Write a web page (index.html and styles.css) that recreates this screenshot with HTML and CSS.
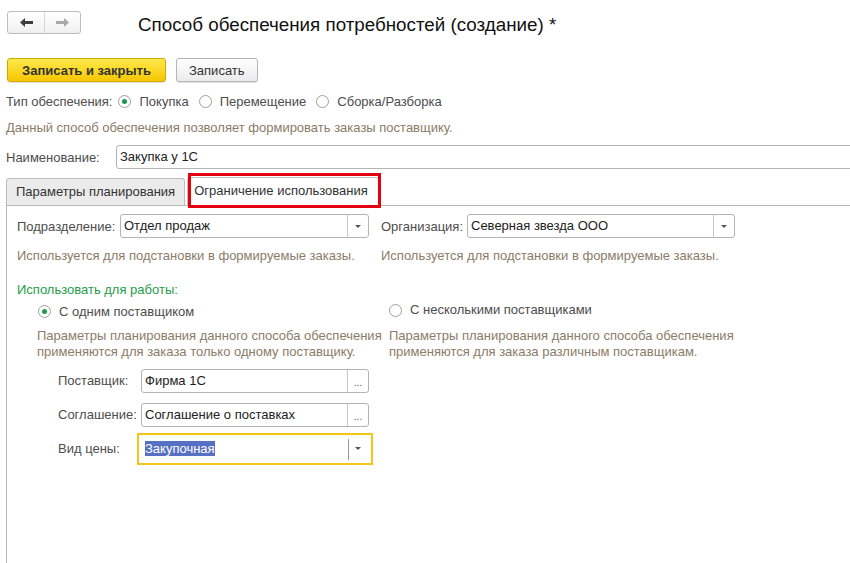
FILE: index.html
```html
<!DOCTYPE html>
<html lang="ru">
<head>
  <meta charset="UTF-8" />
  <meta name="viewport" content="width=device-width, initial-scale=1.0" />
  <title>Способ обеспечения потребностей (создание)</title>
  <link rel="stylesheet" href="styles.css">
</head>
<body>
  <div class="page">
    <div class="header">
      <div class="nav">
        <button class="nav-btn">
          <svg width="13" height="9" viewBox="0 0 13 9"><path d="M0 4.5 L5 0 V3 H13 V6 H5 V9 Z" fill="#3f3f3f"/></svg>
        </button>
        <button class="nav-btn">
          <svg width="13" height="9" viewBox="0 0 13 9"><path d="M13 4.5 L8 0 V3 H0 V6 H8 V9 Z" fill="#a8a8a8"/></svg>
        </button>
      </div>
      <h1 class="title">Способ обеспечения потребностей (создание) *</h1>
    </div>

    <div class="toolbar">
      <button class="btn btn-primary">Записать и закрыть</button>
      <button class="btn">Записать</button>
    </div>

    <div class="type-row">
      <span class="label">Тип обеспечения:</span>
      <label class="radio"><span class="circle checked"></span>Покупка</label>
      <label class="radio"><span class="circle"></span>Перемещение</label>
      <label class="radio"><span class="circle"></span>Сборка/Разборка</label>
    </div>

    <div class="hint top-hint">Данный способ обеспечения позволяет формировать заказы поставщику.</div>

    <div class="name-row">
      <span class="label name-label">Наименование:</span>
      <div class="input name-input"><span class="value">Закупка у 1С</span></div>
    </div>

    <div class="tabs">
      <div class="tab">Параметры планирования</div>
      <div class="tab active">Ограничение использования<span class="mark"></span></div>
      <div class="tabs-fill"></div>
    </div>

    <div class="panel">
      <div class="two-cols">
        <div class="col col-left">
          <div class="field">
            <span class="label lbl-dept">Подразделение:</span>
            <div class="input grow"><span class="value">Отдел продаж</span><span class="drop"></span></div>
          </div>
          <div class="hint col-hint">Используется для подстановки в формируемые заказы.</div>
        </div>
        <div class="col col-right">
          <div class="field">
            <span class="label lbl-org">Организация:</span>
            <div class="input grow"><span class="value">Северная звезда ООО</span><span class="drop"></span></div>
          </div>
          <div class="hint col-hint">Используется для подстановки в формируемые заказы.</div>
        </div>
      </div>

      <div class="group-title">Использовать для работы:</div>

      <div class="mode-cols">
        <div class="mode mode-left">
          <label class="radio"><span class="circle checked"></span>С одним поставщиком</label>
          <div class="hint mode-hint">Параметры планирования данного способа обеспечения<br>применяются для заказа только одному поставщику.</div>
        </div>
        <div class="mode mode-right">
          <label class="radio"><span class="circle"></span>С несколькими поставщиками</label>
          <div class="hint mode-hint">Параметры планирования данного способа обеспечения<br>применяются для заказа различным поставщикам.</div>
        </div>
      </div>

      <div class="supplier">
        <div class="field srow">
          <span class="label lbl-sup">Поставщик:</span>
          <div class="input sinput"><span class="value">Фирма 1С</span><span class="more">...</span></div>
        </div>
        <div class="field srow">
          <span class="label lbl-sup">Соглашение:</span>
          <div class="input sinput"><span class="value">Соглашение о поставках</span><span class="more">...</span></div>
        </div>
        <div class="field srow">
          <span class="label lbl-sup">Вид цены:</span>
          <div class="input sinput focused"><span class="value"><span class="selected">Закупочная</span></span><span class="drop short"></span></div>
        </div>
      </div>
    </div>
  </div>
</body>
</html>
```

FILE: styles.css
```css
html, body { margin: 0; height: 100%; overflow: hidden; }
body { font-family: "Liberation Sans", Arial, sans-serif; font-size: 13px; color: #333; background: #fff; }
.page { display: flex; flex-direction: column; height: 100vh; padding-left: 6px; box-sizing: border-box; }

.header { display: flex; align-items: center; margin-top: 11px; height: 23px; }
.nav { display: flex; margin-left: 1px; border: 1px solid #bcbcbc; border-radius: 3px; background: linear-gradient(#ffffff, #f0f0f0); height: 23px; box-sizing: border-box; }
.nav-btn { width: 36px; height: 21px; border: 0; background: none; padding: 0; display: flex; align-items: center; justify-content: center; }
.nav-btn + .nav-btn { border-left: 1px solid #d6d6d6; }
.title { margin: 3px 0 0 57px; font-size: 18.8px; font-weight: normal; color: #111; line-height: 23px; }

.toolbar { display: flex; gap: 10px; margin-top: 24px; margin-left: 1px; }
.btn { height: 24px; padding: 0 12px; font-family: inherit; font-size: 13px; color: #333; border: 1px solid #b5b5b5; border-radius: 3px; background: linear-gradient(#ffffff, #ebebeb); box-shadow: 0 1px 1px rgba(0,0,0,0.12); }
.btn-primary { width: 159px; font-weight: bold; background: linear-gradient(#ffe94d, #f6c700); border-color: #d1a800; color: #333; }

.label { color: #4d4d4d; white-space: nowrap; }
.hint { color: #8a7c68; line-height: 16px; }

.radio { display: inline-flex; align-items: center; color: #4d4d4d; white-space: nowrap; }
.circle { width: 13px; height: 13px; box-sizing: border-box; border: 1px solid #a0a0a0; border-radius: 50%; background: #fff; margin-right: 8px; display: flex; align-items: center; justify-content: center; }
.circle.checked::after { content: ""; width: 5px; height: 5px; border-radius: 50%; background: #1a9b4b; }

.type-row { display: flex; align-items: center; height: 18px; margin-top: 10px; }
.type-row .label { margin-right: 6px; }
.type-row .radio { margin-right: 10px; }

.top-hint { margin-top: 10px; }

.name-row { display: flex; align-items: center; margin-top: 9px; }
.name-label { width: 110px; }
.input { display: flex; height: 24px; box-sizing: border-box; border: 1px solid #b4b4b4; border-radius: 3px; background: #fff; color: #222; }
.value { flex: 1; padding-left: 3px; line-height: 22px; white-space: nowrap; overflow: hidden; }
.name-input { flex: 1; margin-right: -20px; }

.drop { width: 20px; border-left: 1px solid #c8c8c8; display: flex; align-items: center; justify-content: center; }
.drop::after { content: ""; border-left: 3px solid transparent; border-right: 3px solid transparent; border-top: 3px solid #555; }
.drop.short { border-left: 0; position: relative; }
.drop.short::before { content: ""; position: absolute; left: 0; top: 1px; bottom: 0; border-left: 1px solid #9a9a9a; }
.more { width: 20px; border-left: 1px solid #c8c8c8; color: #555; font-size: 10px; text-align: center; line-height: 26px; }

.tabs { display: flex; margin-top: 9px; height: 27px; }
.tab { position: relative; height: 27px; box-sizing: border-box; padding: 0 9px; line-height: 25px; border: 1px solid #bdbdbd; border-bottom: 0; border-radius: 3px 3px 0 0; background: #ebebeb; color: #333; white-space: nowrap; }
.tab + .tab { margin-left: 2px; }
.tab.active { background: #fff; padding: 0 10px 0 6px; height: 28px; margin-top: -1px; z-index: 1; }
.mark { position: absolute; left: 0; top: -5px; width: 193px; height: 35px; box-sizing: border-box; border: 3px solid #e3000f; }
.tabs-fill { flex: 1; }

.panel { flex: 1; border-left: 1px solid #b8b8b8; border-top: 1px solid #b8b8b8; padding: 8px 0 0 10px; }

.two-cols { display: flex; gap: 12px; }
.col-left { width: 352px; }
.col-right { width: 354px; }
.field { display: flex; align-items: center; }
.grow { flex: 1; }
.lbl-dept { width: 103px; }
.lbl-org { width: 86px; }
.col-hint { margin-top: 10px; }

.group-title { color: #1f9d4a; margin-top: 18px; line-height: 16px; }

.mode-cols { display: flex; margin-top: 4px; }
.mode-left { width: 351px; padding-left: 21px; }
.mode-left .mode-hint { margin-left: -1px; }
.mode .radio { line-height: 16px; }
.mode-hint { margin-top: 8px; }

.supplier { margin-top: 9px; padding-left: 41px; }
.srow + .srow { margin-top: 10px; }
.lbl-sup { width: 83px; }
.sinput { width: 228px; }
.focused { border-color: transparent; border-radius: 0; outline: 2px solid #f5c518; outline-offset: 2px; }
.selected { background: #5670c4; color: #fff; }
```
